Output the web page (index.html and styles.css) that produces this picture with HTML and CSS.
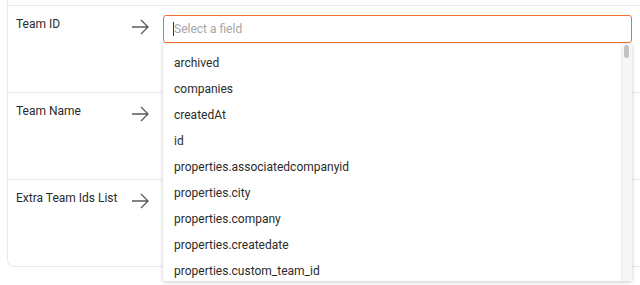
FILE: index.html
```html
<!DOCTYPE html>
<html lang="en">
<head>
    <meta charset="UTF-8">
    <meta name="viewport" content="width=device-width, initial-scale=1.0">
    <title>Field Mapping</title>
    <link rel="stylesheet" href="styles.css">
</head>
<body>
    <div class="mapping-card">
        <div class="mapping-row">
            <div class="field-label">Team ID</div>
            <svg class="map-arrow" width="18" height="16" viewBox="0 0 18 16">
                <path d="M1 8 H17 M10 1 L17 8 L10 15" fill="none" stroke="#5a5a5a" stroke-width="1.3"/>
            </svg>
            <div class="field-select">
                <div class="select-input focused">
                    <span class="caret"></span>
                    <span class="placeholder">Select a field</span>
                </div>
                <div class="select-menu">
                    <ul class="option-list">
                        <li>archived</li>
                        <li>companies</li>
                        <li>createdAt</li>
                        <li>id</li>
                        <li>properties.associatedcompanyid</li>
                        <li>properties.city</li>
                        <li>properties.company</li>
                        <li>properties.createdate</li>
                        <li>properties.custom_team_id</li>
                    </ul>
                    <div class="scroll-track">
                        <div class="scroll-thumb"></div>
                    </div>
                </div>
            </div>
        </div>

        <div class="mapping-row">
            <div class="field-label">Team Name</div>
            <svg class="map-arrow" width="18" height="16" viewBox="0 0 18 16">
                <path d="M1 8 H17 M10 1 L17 8 L10 15" fill="none" stroke="#5a5a5a" stroke-width="1.3"/>
            </svg>
            <div class="field-select"></div>
        </div>

        <div class="mapping-row">
            <div class="field-label">Extra Team Ids List</div>
            <svg class="map-arrow" width="18" height="16" viewBox="0 0 18 16">
                <path d="M1 8 H17 M10 1 L17 8 L10 15" fill="none" stroke="#5a5a5a" stroke-width="1.3"/>
            </svg>
            <div class="field-select"></div>
        </div>
    </div>
</body>
</html>
```

FILE: styles.css
```css
:root {
    --border-color: #e9e9e9;
    --text-primary: #2b2b2b;
    --text-muted: #a6a6a6;
    --accent: #f0712c;
}

* {
    margin: 0;
    padding: 0;
    box-sizing: border-box;
}

html,
body {
    overflow: hidden;
}

body {
    font-family: Roboto, 'Liberation Sans', Arial, sans-serif;
    font-size: 12px;
    color: var(--text-primary);
    background-color: #ffffff;
    min-height: 100vh;
    padding-bottom: 20px;
}

/* card continues past the right edge of the window */
.mapping-card {
    margin-left: 7px;
    padding-top: 5px;
    border: 1px solid var(--border-color);
    border-top: none;
    border-right: none;
    border-radius: 0 0 0 7px;
}

.mapping-row {
    display: flex;
    align-items: flex-start;
    height: 87px;
    padding: 9px 0 0 8px;
    border-top: 1px solid var(--border-color);
}

.mapping-row:first-child {
    position: relative;
    z-index: 2;
}

.field-label {
    width: 115px;
    margin-top: 1px;
    line-height: 17px;
}

.map-arrow {
    margin-top: 4px;
    flex-shrink: 0;
}

.field-select {
    position: relative;
    width: 469px;
    margin-left: 14px;
}

.select-input {
    display: flex;
    align-items: center;
    height: 28px;
    padding-left: 9px;
    border: 1px solid var(--border-color);
    border-radius: 3px;
    background: #fff;
}

.select-input.focused {
    border: 1.5px solid var(--accent);
}

.caret {
    width: 1px;
    height: 14px;
    background: #333;
}

.placeholder {
    color: var(--text-muted);
}

/* Dropdown menu lies over the rows below */
.select-menu {
    position: absolute;
    top: 29px;
    left: 0;
    width: 469px;
    height: 237px;
    display: flex;
    background: #fff;
    box-shadow: 0 1px 4px rgba(0, 0, 0, 0.22);
    border-radius: 0 0 2px 2px;
    overflow: hidden;
}

.option-list {
    flex: 1;
    list-style: none;
    padding-top: 6px;
}

.option-list li {
    height: 26px;
    line-height: 26px;
    padding-left: 11px;
}

.scroll-track {
    width: 11px;
    background: #f6f6f6;
    border-left: 1px solid #efefef;
    padding: 0 3px 0 2px;
}

.scroll-thumb {
    height: 13px;
    background: #c3c3c3;
    border-radius: 3px;
    margin-top: 1px;
}
```
